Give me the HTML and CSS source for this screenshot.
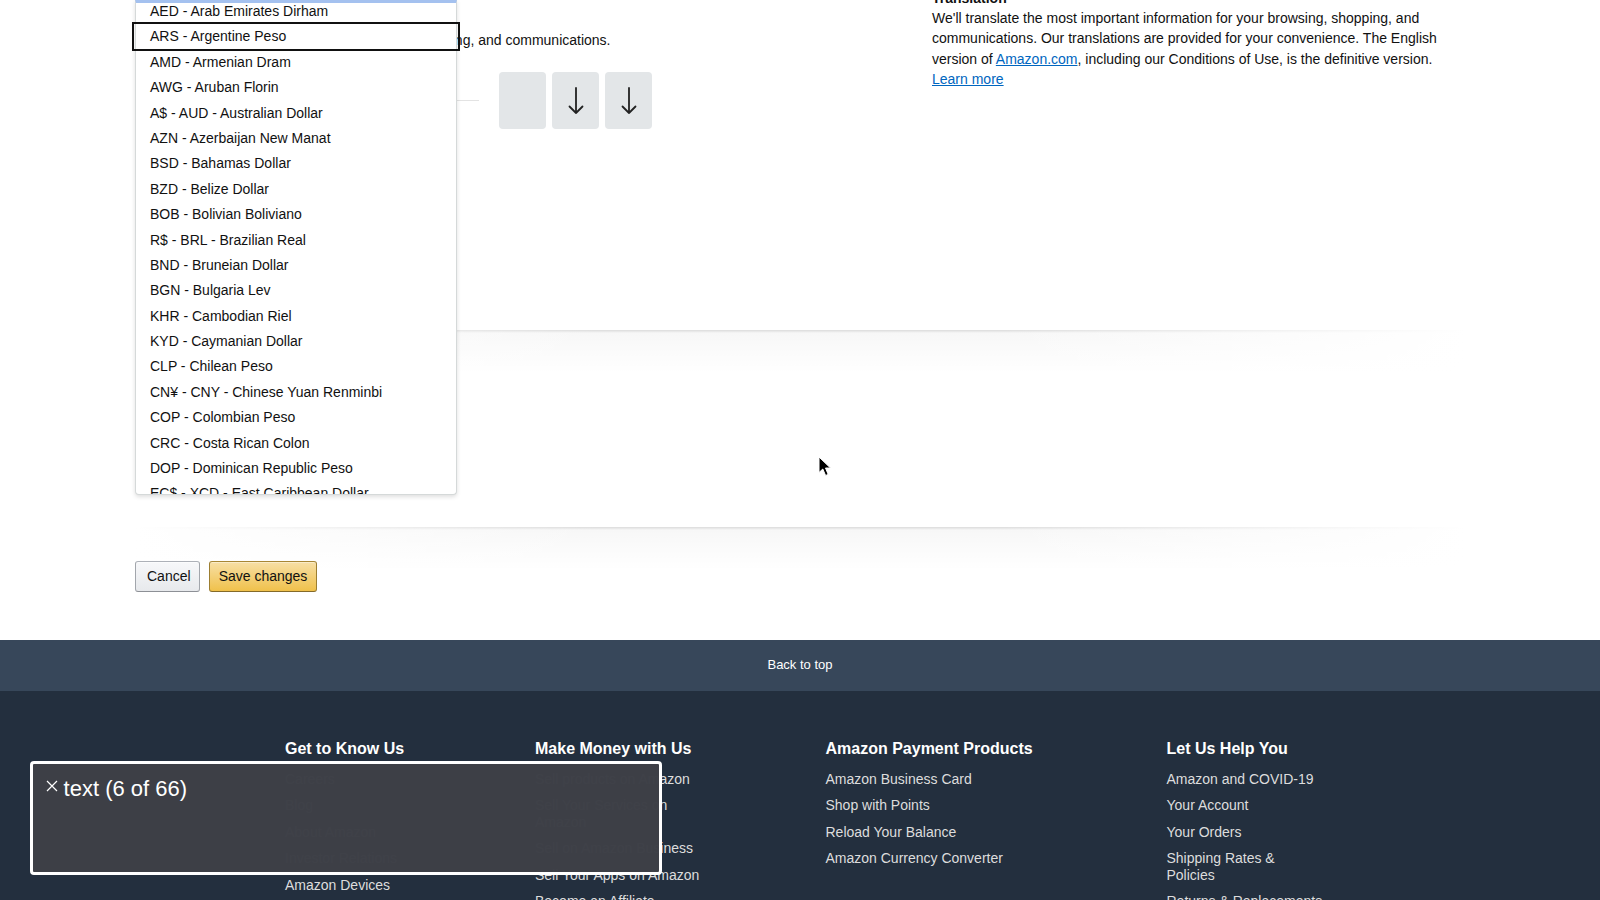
FILE: index.html
```html
<!DOCTYPE html>
<html lang="en">
<head>
<meta charset="utf-8">
<title>Language &amp; Currency Settings</title>
<link rel="stylesheet" href="styles.css">
</head>
<body>
<div class="page">
  <main class="content">
    <section class="top">
      <div class="left-col">
        <p class="lead">Select the language you prefer for browsing, shopping, and communications.</p>
        <div class="select-row">
          <div class="select-line"></div>
          <div class="tiles">
            <div class="tile"></div>
            <div class="tile">
              <svg class="arrow" width="20" height="30" viewBox="0 0 20 30"><path d="M10 2 V27 M3.5 20.5 L10 27 L16.5 20.5" fill="none" stroke="#222" stroke-width="1.8" stroke-linecap="round" stroke-linejoin="round"/></svg>
            </div>
            <div class="tile">
              <svg class="arrow" width="20" height="30" viewBox="0 0 20 30"><path d="M10 2 V27 M3.5 20.5 L10 27 L16.5 20.5" fill="none" stroke="#222" stroke-width="1.8" stroke-linecap="round" stroke-linejoin="round"/></svg>
            </div>
          </div>
        </div>
      </div>
      <div class="right-col">
        <h4 class="sub-head">Translation</h4>
        <p class="note">We'll translate the most important information for your browsing, shopping, and<br>communications. Our translations are provided for your convenience. The English<br>version of <a href="#" class="link">Amazon.com</a>, including our Conditions of Use, is the definitive version.<br><a href="#" class="link">Learn more</a></p>
      </div>
    </section>

    <div class="divider"></div>
    <div class="blank"></div>
    <div class="divider divider-tight"></div>

    <div class="actions">
      <button class="btn btn-secondary">Cancel</button>
      <button class="btn btn-primary">Save changes</button>
    </div>

    <div class="dropdown">
      <div class="dropdown-view">
        <ul class="dropdown-list">
          <li>AED - Arab Emirates Dirham</li>
          <li>ARS - Argentine Peso</li>
          <li>AMD - Armenian Dram</li>
          <li>AWG - Aruban Florin</li>
          <li>A$ - AUD - Australian Dollar</li>
          <li>AZN - Azerbaijan New Manat</li>
          <li>BSD - Bahamas Dollar</li>
          <li>BZD - Belize Dollar</li>
          <li>BOB - Bolivian Boliviano</li>
          <li>R$ - BRL - Brazilian Real</li>
          <li>BND - Bruneian Dollar</li>
          <li>BGN - Bulgaria Lev</li>
          <li>KHR - Cambodian Riel</li>
          <li>KYD - Caymanian Dollar</li>
          <li>CLP - Chilean Peso</li>
          <li>CN¥ - CNY - Chinese Yuan Renminbi</li>
          <li>COP - Colombian Peso</li>
          <li>CRC - Costa Rican Colon</li>
          <li>DOP - Dominican Republic Peso</li>
          <li>EC$ - XCD - East Caribbean Dollar</li>
          <li>EGP - Egyptian Pound</li>
        </ul>
      </div>
      <div class="dropdown-focus"></div>
    </div>

    <svg class="cursor" width="14" height="21" viewBox="0 0 14 21"><path d="M1 1 L1 16.5 L4.8 13 L7.6 19.5 L10.2 18.4 L7.5 12 L12.5 12 Z" fill="#000" stroke="#fff" stroke-width="1" stroke-linejoin="round"/></svg>
  </main>

  <footer class="footer">
    <div class="back-top">Back to top</div>
    <div class="footer-main">
      <div class="footer-cols">
        <div class="fcol">
          <h3 class="fhead">Get to Know Us</h3>
          <ul class="flinks">
            <li>Careers</li>
            <li>Blog</li>
            <li>About Amazon</li>
            <li>Investor Relations</li>
            <li>Amazon Devices</li>
            <li>Amazon Science</li>
          </ul>
        </div>
        <div class="fcol">
          <h3 class="fhead">Make Money with Us</h3>
          <ul class="flinks">
            <li>Sell products on Amazon</li>
            <li>Sell Your Services on<br>Amazon</li>
            <li>Sell on Amazon Business</li>
            <li>Sell Your Apps on Amazon</li>
            <li>Become an Affiliate</li>
          </ul>
        </div>
        <div class="fcol">
          <h3 class="fhead">Amazon Payment Products</h3>
          <ul class="flinks">
            <li>Amazon Business Card</li>
            <li>Shop with Points</li>
            <li>Reload Your Balance</li>
            <li>Amazon Currency Converter</li>
          </ul>
        </div>
        <div class="fcol">
          <h3 class="fhead">Let Us Help You</h3>
          <ul class="flinks">
            <li>Amazon and COVID-19</li>
            <li>Your Account</li>
            <li>Your Orders</li>
            <li>Shipping Rates &amp;<br>Policies</li>
            <li>Returns &amp; Replacements</li>
          </ul>
        </div>
      </div>
    </div>
  </footer>

  <div class="overlay">
    <svg class="overlay-x" width="12" height="12" viewBox="0 0 12 12"><path d="M1 1 L11 11 M11 1 L1 11" stroke="#fff" stroke-width="1.2" fill="none"/></svg>
    <span class="overlay-text">text (6 of 66)</span>
  </div>
</div>
</body>
</html>
```

FILE: styles.css
```css
* { box-sizing: border-box; }

html, body {
  margin: 0;
  padding: 0;
  width: 1600px;
  height: 900px;
  overflow: hidden;
  background: #fff;
}

body {
  font-family: "Liberation Sans", Arial, sans-serif;
  font-size: 14px;
  color: #111;
}

.page {
  position: relative;
  width: 1600px;
  height: 900px;
  overflow: hidden;
}

.content {
  position: relative;
  margin: 0 135px;
  width: 1330px;
}

/* top section */
.top {
  display: flex;
  align-items: flex-start;
  height: 329.5px;
}

.left-col {
  width: 797px;
  padding-top: 29.5px;
}

.lead {
  margin: 0;
  line-height: 20px;
}

.select-row {
  display: flex;
  align-items: center;
  margin-top: 22.5px;
  gap: 20px;
}

.select-line {
  width: 344px;
  height: 1px;
  background: #e3e3e3;
}

.tiles {
  display: flex;
  gap: 6px;
}

.tile {
  width: 47px;
  height: 57px;
  border-radius: 4px;
  background: #e3e6e8;
  display: flex;
  align-items: center;
  justify-content: center;
}

.arrow { display: block; margin-top: 1px; }

.right-col {
  width: 520px;
  margin-top: -12.2px;
}

.sub-head {
  margin: 0;
  font-size: 14px;
  font-weight: 700;
  line-height: 20px;
}

.note {
  margin: 0;
  line-height: 20.4px;
}

.link {
  color: #0066c0;
  text-decoration: underline;
}

/* dividers */
.divider {
  position: relative;
  height: 44px;
  background: linear-gradient(to bottom, rgba(0,0,0,.14), rgba(0,0,0,.03) 3px, rgba(0,0,0,0));
}

.divider::after {
  content: "";
  position: absolute;
  left: 0;
  right: 0;
  top: 0;
  bottom: 0;
  background: linear-gradient(to right, #fff, rgba(255,255,255,0) 35%, rgba(255,255,255,0) 65%, #fff);
}

.blank { height: 153px; }

.divider-tight { margin-bottom: -10px; }

/* buttons */
.actions {
  position: relative;
  display: flex;
  gap: 9px;
  height: 31.6px;
}

.btn {
  height: 31.6px;
  padding: 0 11px;
  border-radius: 3px;
  border: 1px solid;
  font-family: "Liberation Sans", Arial, sans-serif;
  font-size: 14px;
  color: #111;
  line-height: 29px;
  white-space: nowrap;
  cursor: pointer;
}

.btn-secondary {
  width: 65px;
  background: linear-gradient(to bottom, #f7f8fa, #e7e9ec);
  border-color: #adb1b8 #a2a6ac #8d9096;
  box-shadow: inset 0 1px 0 rgba(255,255,255,.6);
}

.btn-primary {
  width: 108px;
  padding: 0 6px;
  background: linear-gradient(to bottom, #f7dfa5, #f0c14b);
  border-color: #a88734 #9c7e31 #846a29;
  box-shadow: inset 0 1px 0 rgba(255,255,255,.4);
}

/* dropdown menu */
.dropdown {
  position: absolute;
  left: 0;
  top: 0;
  width: 322px;
  height: 495px;
}

.dropdown-view {
  height: 100%;
  overflow: hidden;
  background: #fff;
  border: 1px solid #d5d9d9;
  border-top: 3px solid #a4c1ef;
  border-radius: 0 0 4px 4px;
  box-shadow: 0 2px 4px rgba(0,0,0,.13);
}

.dropdown-list {
  list-style: none;
  margin: -4px 0 0;
  padding: 0;
}

.dropdown-list li {
  padding-left: 14px;
  line-height: 25.4px;
  height: 25.4px;
  white-space: nowrap;
}

.dropdown-focus {
  position: absolute;
  left: -3.4px;
  top: 22.4px;
  width: 328.4px;
  height: 28.6px;
  border: 2px solid #111;
}

.cursor {
  position: absolute;
  left: 683px;
  top: 456px;
}

/* footer */
.footer {
  margin-top: 48.4px;
}

.back-top {
  background: #37475a;
  height: 51px;
  line-height: 50px;
  text-align: center;
  color: #fff;
  font-size: 13px;
}

.footer-main {
  background: #232f3e;
  height: 260px;
  padding-top: 47.4px;
}

.footer-cols {
  display: grid;
  grid-template-columns: 250px 290.5px 341px 180px;
  padding-left: 285px;
}

.fhead {
  margin: 0 0 12.75px;
  font-size: 16px;
  font-weight: 700;
  line-height: 19.2px;
  color: #fff;
  white-space: nowrap;
}

.flinks {
  list-style: none;
  margin: 0;
  padding: 0;
}

.flinks li {
  color: #ddd;
  font-size: 14px;
  line-height: 16.5px;
  margin-bottom: 10px;
  white-space: nowrap;
}

/* screen reader overlay */
.overlay {
  position: absolute;
  left: 29.6px;
  top: 761px;
  width: 632.4px;
  height: 113.5px;
  border: 3px solid #fff;
  border-radius: 4px;
  background: rgba(61,64,71,.992);
  display: flex;
  align-items: flex-start;
  padding: 12px 0 0 13px;
  color: #fff;
}

.overlay-x {
  display: block;
  margin-top: 3.5px;
}

.overlay-text {
  margin-left: 6px;
  font-family: "Liberation Sans", Arial, sans-serif;
  font-size: 22px;
  line-height: 26px;
}
```
